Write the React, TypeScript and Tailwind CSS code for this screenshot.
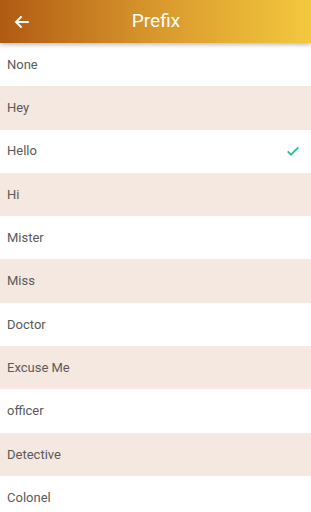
import React from "react";

const items = ["None", "Hey", "Hello", "Hi", "Mister", "Miss", "Doctor", "Excuse Me", "officer", "Detective", "Colonel"];

export default function App() {
  return (
    <div className="w-[311px] h-[512px] overflow-hidden bg-white relative" style={{ fontFamily: "Roboto, 'Liberation Sans', sans-serif" }}>
      <div className="relative z-10 h-[43px] flex items-center bg-gradient-to-r from-[#b05a12] via-[#d8982c] to-[#f3c83e] shadow-[0_2px_4px_rgba(0,0,0,0.25)]">
        <div className="w-[42px] flex justify-center pl-[1px]">
          <svg width="18" height="18" viewBox="0 0 24 24" fill="none" stroke="white" strokeWidth="2.6" strokeLinecap="butt">
            <path d="M21 12H4" />
            <path d="M11.5 4.5L4 12l7.5 7.5" />
          </svg>
        </div>
        <div className="absolute left-0 right-0 text-center text-white text-[19px] pointer-events-none pl-[1px]">Prefix</div>
      </div>
      <div className="flex flex-col">
        {items.map((t, i) => (
          <div
            key={t}
            className={`h-[43.3px] flex items-center justify-between pl-[7px] pr-[10px] text-[13px] text-[#5a5a5a] ${i % 2 === 1 ? "bg-[#f5e8e0]" : "bg-white"}`}
          >
            <span>{t}</span>
            {t === "Hello" && (
              <svg width="16" height="16" viewBox="0 0 24 24" fill="none" stroke="#1fbf97" strokeWidth="2.6">
                <path d="M4 12.5l5 5L20 6.5" />
              </svg>
            )}
          </div>
        ))}
      </div>
    </div>
  );
}
